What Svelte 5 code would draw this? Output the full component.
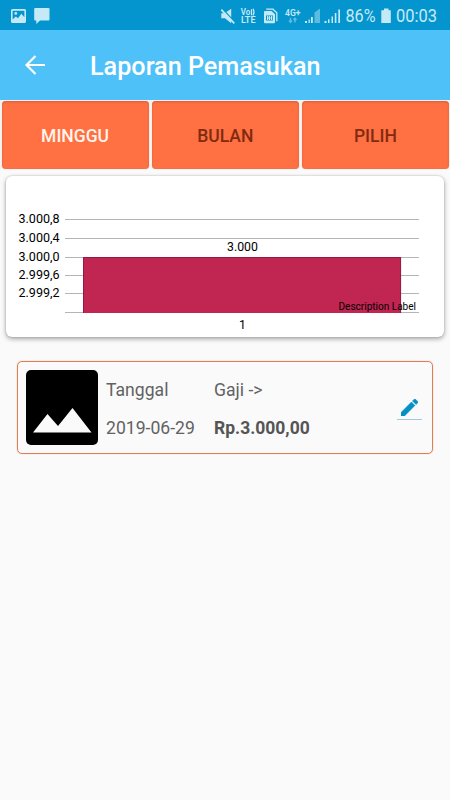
<script>
  let active = $state('MINGGU');
  const periods = ['MINGGU', 'BULAN', 'PILIH'];
  const gridLines = [
    { y: 43.5, label: '3.000,8' },
    { y: 62.5, label: '3.000,4' },
    { y: 81.5, label: '3.000,0' },
    { y: 99.5, label: '2.999,6' },
    { y: 117.5, label: '2.999,2' },
    { y: 136.5, label: '' }
  ];
</script>

<div class="screen">
  <div class="status">
    <svg class="photo" width="15" height="14" viewBox="0 0 15 14">
      <path fill-rule="evenodd" d="M1.5 0h12A1.5 1.5 0 0 1 15 1.5v11a1.5 1.5 0 0 1-1.5 1.5h-12A1.5 1.5 0 0 1 0 12.500v-11A1.500 1.500 0 0 1 1.500 0zM1.600 1.700v8.800l3.200-3 2.200 1.700 3.300-4.500 3.100 3.500V1.700zM4.800 3a1.400 1.400 0 1 1 0 2.800 1.400 1.400 0 0 1 0-2.800z" />
    </svg>
    <svg class="chat" width="16" height="16" viewBox="0 0 16 16">
      <path d="M1.200 0h13.300a1 1 0 0 1 1 1v10.500a1 1 0 0 1-1 1H6L2.300 16v-3.500H1.200a1 1 0 0 1-1-1V1a1 1 0 0 1 1-1z" />
    </svg>
    <svg class="tray" width="121" height="20" viewBox="0 0 121 20">
      <path d="M1.300 5.200h3.200l6.700-4.500v14.500L5 10.300H1.300z" />
      <path d="M2.200 .7 15.700 15" stroke="#0595ce" stroke-width="1.500" />
      <path d="M1.300 1.700 14.300 15.300" stroke="#c5eaf7" stroke-width="1.700" />
      <text x="20.700" y="7" font-size="8.500" font-weight="600" textLength="9.500" lengthAdjust="spacingAndGlyphs">Vo</text>
      <path d="M31.500 1.200v6M33 .7q2 3.300 0 6.700" fill="none" stroke="#c5eaf7" stroke-width="1.200" />
      <text x="21" y="15" font-size="8.500" font-weight="600" textLength="14.500" lengthAdjust="spacingAndGlyphs">LTE</text>
      <path d="M46.200 1.200H53l3.800 3.600v8.500" fill="none" stroke="#c5eaf7" stroke-width="1.300" />
      <path fill-rule="evenodd" d="M45 3h6.500L55 6.300v8a1 1 0 0 1-1 1h-9a1 1 0 0 1-1-1V4a1 1 0 0 1 1-1zM46 7.500v5h7v-5z" />
      <path d="M47 8h1.200v4H47zM49 8h1v4h-1zM51 8h1.200v4H51zM47 9.500h5v1h-5z" />
      <text x="65" y="7.700" font-size="8.500" font-weight="600" textLength="15.500" lengthAdjust="spacingAndGlyphs">4G+</text>
      <g opacity=".45">
        <path d="M70.500 14V9.800M69 12.500l1.500 1.800 1.500-1.800M75 14.500v-4.500M73.500 12l1.500-1.800 1.500 1.800" fill="none" stroke="#c5eaf7" stroke-width="1.500" />
        <path d="M94.500 4.500 100 .5V15h-5.500z" />
      </g>
      <path d="M85 13h2v2h-2zM88.500 11.500h1.300V15h-1.300zM91 9h1.800v6H91z" />
      <path d="M104.500 13h2v2h-2zM108 11.300h1.500V15H108zM111.500 8.500h1.500V15h-1.500zM114.800 5h1.600v10h-1.600zM118.300 1.500h1.700V15h-1.700z" />
    </svg>
    <svg class="level" width="96" height="22" viewBox="0 0 96 22">
      <text x="-.5" y="15" font-size="18" textLength="30" lengthAdjust="spacingAndGlyphs">86%</text>
      <path d="M38 1.500h4.500v1.700h2.300v12.700H35.300V3.200H38z" />
      <text x="50" y="15" font-size="18" textLength="41" lengthAdjust="spacingAndGlyphs">00:03</text>
    </svg>
  </div>

  <header>
    <svg width="20" height="20" viewBox="0 0 20 20">
      <path d="M20 10H2M10.500 1 1.500 10l9 9" fill="none" stroke="#fff" stroke-width="2.200" />
    </svg>
    <h1>Laporan Pemasukan</h1>
  </header>

  <nav>
    {#each periods as period}
      <button class:active={active === period} onclick={() => (active = period)}>{period}</button>
    {/each}
  </nav>

  <section class="card">
    <svg width="438" height="161" viewBox="0 0 438 161">
      {#each gridLines as line}
        <path d="M59 {line.y}H413" stroke="#b5b5b5" stroke-width="1" />
        {#if line.label}
          <text x="12.500" y={line.y + 3.900} font-size="12.200" textLength="41" lengthAdjust="spacingAndGlyphs">{line.label}</text>
        {/if}
      {/each}
      <rect x="77" y="81" width="318" height="56" fill="#c12552" />
      <path d="M77.500 137V81.500H394.600V137" fill="none" stroke="#8c1740" stroke-width=".8" />
      <text x="236.500" y="75.300" font-size="12.300" text-anchor="middle">3.000</text>
      <text x="236.500" y="153.300" font-size="12.300" text-anchor="middle">1</text>
      <text x="332.500" y="133.600" font-size="10" textLength="77.500" lengthAdjust="spacingAndGlyphs">Description Label</text>
    </svg>
  </section>

  <article>
    <svg class="thumb" width="72" height="75" viewBox="0 0 72 75">
      <rect width="72" height="75" rx="5" />
      <path d="M7 62.500 21.500 44l10.500 12 14.500-18L65.500 62.500z" fill="#fafafa" />
    </svg>
    <div class="date"><span>Tanggal</span><span>2019-06-29</span></div>
    <div class="amount"><span>Gaji -&gt;</span><strong>Rp.3.000,00</strong></div>
    <div class="edit">
      <svg width="17" height="17" viewBox="3 3 18 18">
        <path fill="#0590c3" stroke="#0590c3" stroke-width=".5" d="M3 17.250V21h3.750L17.810 9.940l-3.750-3.750L3 17.250zM20.710 7.040a1 1 0 0 0 0-1.410l-2.340-2.340a1 1 0 0 0-1.410 0l-1.830 1.830 3.750 3.750 1.830-1.830z" />
      </svg>
    </div>
  </article>
</div>

<style>
  :global(body) {
    margin: 0;
    background: #fafafa;
  }
  .screen {
    width: 450px;
    height: 800px;
    overflow: hidden;
    background: #fafafa;
    font-family: Roboto, sans-serif;
  }
  svg {
    display: block;
    flex: none;
  }
  .status {
    display: flex;
    height: 30px;
    background: #0595ce;
    fill: #c5eaf7;
  }
  .photo {
    margin: 9px 0 0 11px;
  }
  .chat {
    margin: 8px 0 0 8px;
  }
  .tray {
    margin: 8px 0 0 170px;
  }
  .level {
    margin: 7px 0 0 5px;
  }
  header {
    display: flex;
    align-items: center;
    box-sizing: border-box;
    height: 70px;
    padding-left: 25px;
    background: #4fc1f9;
  }
  h1 {
    margin: 3px 0 0 45px;
    font-size: 25.200px;
    font-weight: 500;
    line-height: 30px;
    color: #fff;
    white-space: nowrap;
  }
  nav {
    display: flex;
    gap: 3px;
    padding: 1px 1px 0 1.500px;
    background: #f8f3ef;
    height: 69px;
    box-sizing: border-box;
  }
  button {
    flex: 1;
    height: 67.500px;
    border: 0;
    padding: 2px 0 0;
    border-radius: 4px;
    background: #ff7043;
    box-shadow: inset 0 1px 2px #a8502f80, 0 0 1px #9998;
    color: #802b10;
    font: 500 17.500px Roboto, sans-serif;
  }
  button.active {
    color: #fff4ec;
  }
  .card {
    width: 438px;
    height: 161px;
    margin: 7px 0 0 6px;
    border-radius: 6px;
    background: #fff;
    box-shadow: 0 2px 5px #0005, 0 0 2px #0003;
  }
  article {
    display: flex;
    box-sizing: border-box;
    width: 416px;
    height: 93px;
    margin: 24px 0 0 17px;
    padding: 8px 10px 0 8px;
    border: 1px solid #e07e58;
    box-shadow: 0 0 1px #e07e58;
    border-radius: 5px;
    color: #626262;
    font-size: 17.600px;
  }
  .date,
  .amount {
    display: flex;
    flex-direction: column;
    gap: 17px;
    padding-top: 10px;
    line-height: 20.500px;
    white-space: nowrap;
  }
  .date {
    width: 108px;
    margin-left: 8px;
  }
  strong {
    color: #555;
    font-size: 17.500px;
  }
  .edit {
    display: flex;
    justify-content: center;
    box-sizing: border-box;
    width: 25px;
    height: 21px;
    margin: 29px 0 0 auto;
    border-bottom: 1px solid #9fcbe0;
  }
</style>
